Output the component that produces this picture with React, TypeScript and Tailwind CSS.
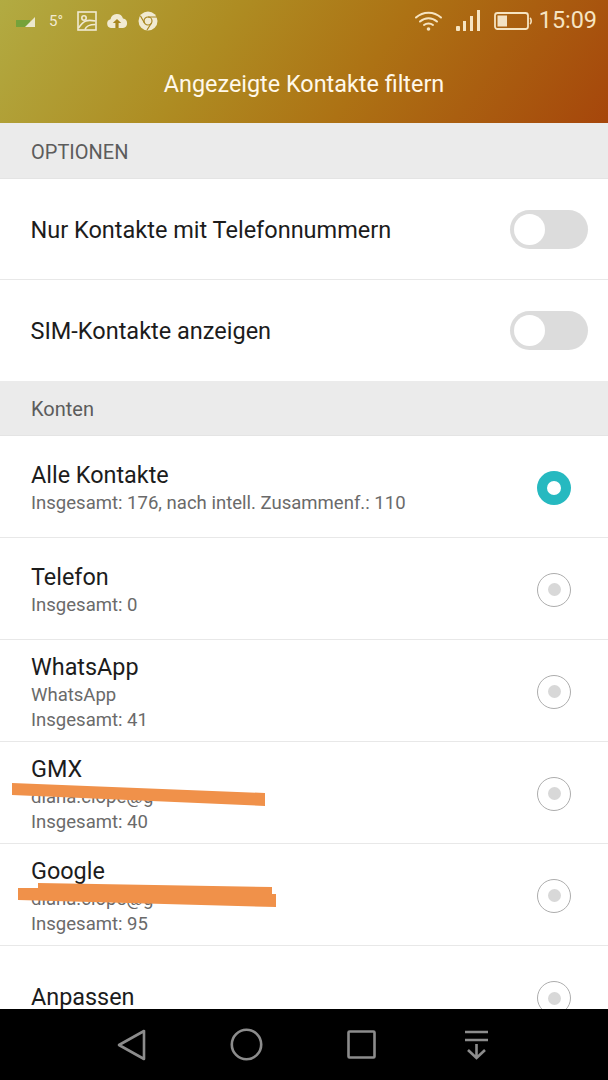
import React from "react";

const font = { fontFamily: "Roboto, 'Noto Sans', sans-serif" };

function Toggle() {
  return (
    <div className="w-[78px] h-[39px] rounded-full bg-[#dcdcdc] p-[4px] flex items-center">
      <div className="w-[31px] h-[31px] rounded-full bg-white" />
    </div>
  );
}

function Radio({ on }: { on?: boolean }) {
  if (on) {
    return (
      <div className="mt-[2px] w-[34px] h-[34px] rounded-full bg-[#26b9c0] flex items-center justify-center">
        <div className="w-[14px] h-[14px] rounded-full bg-white" />
      </div>
    );
  }
  return (
    <div className="mt-[2px] w-[34px] h-[34px] rounded-full border border-[#adadad] flex items-center justify-center">
      <div className="w-[13px] h-[13px] rounded-full bg-[#d8d8d8]" />
    </div>
  );
}

function SectionHead({ label, h }: { label: string; h: string }) {
  return (
    <div className={`${h} bg-[#ebebeb] pl-[31px] pt-[2px] flex items-center text-[20px] text-[#5c5c5c]`}>{label}</div>
  );
}

function ToggleRow({ label, border }: { label: string; border?: boolean }) {
  return (
    <div className={`h-[101px] shrink-0 flex items-center justify-between pl-[30.5px] pr-[20px] ${border ? "border-b border-[#e8e8e8]" : ""}`}>
      <span className="pt-[3px] text-[23.5px] text-[#1c1c1c]">{label}</span>
      <Toggle />
    </div>
  );
}

function AccountRow({ title, lines, on, last }: { title: string; lines: string[]; on?: boolean; last?: boolean }) {
  return (
    <div className={`h-[102px] shrink-0 flex items-center justify-between pl-[31px] pr-[37px] ${last ? "" : "border-b border-[#e8e8e8]"}`}>
      <div className={`flex flex-col ${last ? "pb-[1px]" : "pt-[4px]"}`}>
        <span className={`text-[23.4px] leading-[28px] ${last ? "" : "mb-[2px]"} text-[#1c1c1c]`}>{title}</span>
        {lines.map((l) => (
          <span key={l} className="text-[18.55px] leading-[25px] text-[#6a6a6a]">{l}</span>
        ))}
      </div>
      <Radio on={on} />
    </div>
  );
}

export default function App() {
  return (
    <div className="relative w-[608px] h-[1080px] overflow-hidden bg-white flex flex-col" style={font}>
      <header className="h-[123px] shrink-0 bg-[linear-gradient(125deg,#b2ab42_0%,#ae8c22_35%,#ad7214_60%,#a6460b_100%)] flex flex-col">
        <div className="h-[42px] flex items-center justify-between pl-[16px] pr-[11px] text-[#f1ead2]">
          <div className="flex items-center">
            <svg width="20" height="12" viewBox="0 0 20 12" className="mr-[13px]">
              <rect x="0" y="5" width="14" height="7" fill="#75a23a" />
              <polygon points="9,12 19,12 19,2" fill="#ece8cf" />
            </svg>
            <span className="text-[15px] mr-[14px]">5°</span>
            <svg width="20" height="20" viewBox="0 0 20 20" fill="none" stroke="#f1ead2" strokeWidth="1.6" className="mr-[9px]">
              <rect x="1" y="1" width="18" height="18" />
              <circle cx="7" cy="7" r="2.2" />
              <path d="M1.5 17 C7 9 10 8.5 18.5 10" />
              <path d="M8 18.5 C9 15 12 13.5 18.5 13.5" />
            </svg>
            <svg width="22" height="18" viewBox="0 0 22 18" className="mr-[10px]">
              <path d="M5 16 A4.5 4.5 0 0 1 4.5 7.2 A6.5 6.5 0 0 1 17 6.5 A4.8 4.8 0 0 1 17 16 Z" fill="#f1ead2" />
              <path d="M11 7 L15.2 11 L12.6 11 L12.6 16 L9.4 16 L9.4 11 L6.8 11 Z" fill="#a8861f" />
            </svg>
            <svg width="20" height="20" viewBox="0 0 20 20">
              <circle cx="10" cy="10" r="9.5" fill="#f1ead2" />
              <circle cx="10" cy="10" r="4" fill="#f1ead2" stroke="#a8861f" strokeWidth="1.2" />
              <path d="M10 6 H19 M6.5 12 L2.5 5 M13.5 12 L9 19" stroke="#a8861f" strokeWidth="1.2" fill="none" />
            </svg>
          </div>
          <div className="flex items-center">
            <svg width="29" height="22" viewBox="0 0 29 22" fill="none" stroke="#f6e4c2" strokeWidth="2" strokeLinecap="round" className="mr-[13px]">
              <path d="M2 7.5 C9 1 20 1 27 7.5" />
              <path d="M6 11.5 C11 7 18 7 23 11.5" />
              <path d="M10 15 C12.5 13 16.5 13 19 15" />
              <circle cx="14.5" cy="19" r="1.8" fill="#f6e4c2" stroke="none" />
            </svg>
            <svg width="25" height="22" viewBox="0 0 25 22" fill="#f6e4c2" className="mr-[13px]">
              <rect x="0" y="16" width="4" height="5" rx="1" />
              <rect x="7" y="11" width="3" height="10" />
              <rect x="14" y="6" width="3" height="15" />
              <rect x="21" y="0" width="3" height="21" />
            </svg>
            <svg width="38" height="20" viewBox="0 0 38 20" className="mr-[7px]">
              <rect x="1" y="2" width="33" height="16" rx="2.5" fill="none" stroke="#f6e4c2" strokeWidth="1.8" />
              <rect x="3.5" y="4.5" width="9.5" height="11" fill="#f3e2c4" />
              <path d="M36 7 C37.6 8 37.6 12 36 13" fill="none" stroke="#f6e4c2" strokeWidth="1.6" />
            </svg>
            <span className="text-[23.4px] text-[#f6e4c2]">15:09</span>
          </div>
        </div>
        <div className="flex-1 flex items-center justify-center pt-[4px] text-[23.4px] text-[#fff8ea]">
          Angezeigte Kontakte filtern
        </div>
      </header>

      <main className="flex-1 min-h-0 overflow-hidden flex flex-col">
        <div className="shrink-0 border-b border-[#e4e4e4]">
          <SectionHead label="OPTIONEN" h="h-[55px]" />
        </div>
        <ToggleRow label="Nur Kontakte mit Telefonnummern" border />
        <ToggleRow label="SIM-Kontakte anzeigen" />
        <div className="shrink-0 border-b border-[#e4e4e4]">
          <SectionHead label="Konten" h="h-[54px]" />
        </div>
        <AccountRow title="Alle Kontakte" lines={["Insgesamt: 176, nach intell. Zusammenf.: 110"]} on />
        <AccountRow title="Telefon" lines={["Insgesamt: 0"]} />
        <AccountRow title="WhatsApp" lines={["WhatsApp", "Insgesamt: 41"]} />
        <AccountRow title="GMX" lines={["diana.ciope@g", "Insgesamt: 40"]} />
        <AccountRow title="Google" lines={["diana.ciope@g", "Insgesamt: 95"]} />
        <AccountRow title="Anpassen" lines={[]} last />
      </main>

      <nav className="h-[71px] shrink-0 bg-black flex items-center pl-[74px]">
        <div className="w-[115px] flex justify-center">
          <svg width="30" height="32" viewBox="0 0 30 32" fill="none" stroke="#8c8c8c" strokeWidth="2.6" strokeLinejoin="round">
            <path d="M27 2 V30 L2 16 Z" />
          </svg>
        </div>
        <div className="w-[115px] flex justify-center">
          <svg width="33" height="33" viewBox="0 0 33 33" fill="none" stroke="#8c8c8c" strokeWidth="2.6">
            <circle cx="16.5" cy="16.5" r="14.7" />
          </svg>
        </div>
        <div className="w-[115px] flex justify-center">
          <svg width="29" height="29" viewBox="0 0 29 29" fill="none" stroke="#8c8c8c" strokeWidth="2.6" strokeLinejoin="round">
            <rect x="1.5" y="1.5" width="26" height="26" rx="1" />
          </svg>
        </div>
        <div className="w-[115px] flex justify-center">
          <svg width="25" height="30" viewBox="0 0 25 30" fill="none" stroke="#8c8c8c" strokeWidth="2.6">
            <path d="M1 2 H24 M1 10 H24 M12.5 14 V28 M4 20 L12.5 28 L21 20" />
          </svg>
        </div>
      </nav>

      <svg className="absolute left-0 top-[770px] pointer-events-none" width="300" height="150" viewBox="0 770 300 150">
        <polygon points="12,783 265,793 265,806 12,795" fill="#f0914a" />
        <polygon points="38,883 272,887 272,894 276,894 276,907 18,900 18,888 38,888" fill="#f0914a" />
      </svg>
    </div>
  );
}
